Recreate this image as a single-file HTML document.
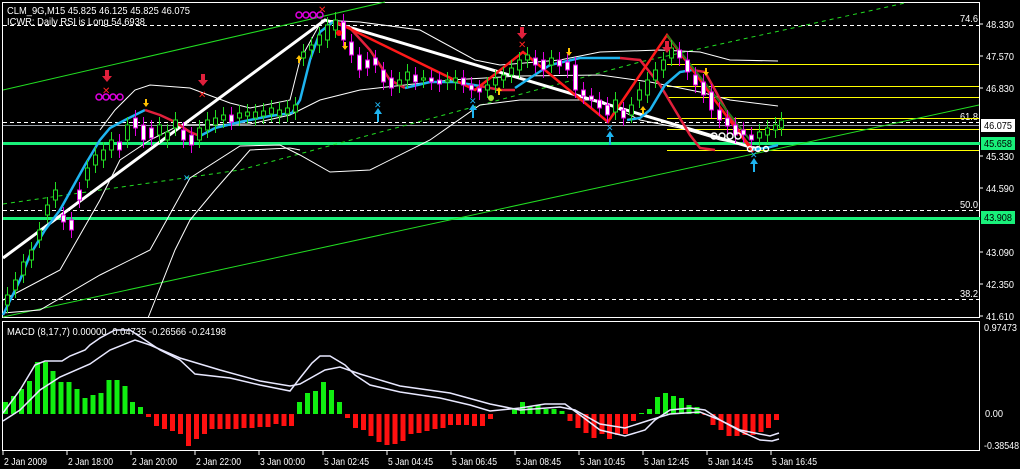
<!DOCTYPE html>
<html><head><meta charset="utf-8"><style>
html,body{margin:0;padding:0;background:#000;width:1020px;height:469px;overflow:hidden}
svg{display:block}
text{font-family:"Liberation Sans",sans-serif}
</style></head><body>
<svg id="s" width="1020" height="469" viewBox="0 0 1020 469" xmlns="http://www.w3.org/2000/svg" shape-rendering="crispEdges" fill="#fff" font-size="10.5">
<rect width="1020" height="469" fill="#000"/>
<rect x="2.5" y="2.5" width="977" height="315" fill="none" stroke="#fff"/>
<rect x="2.5" y="321.5" width="977" height="129" fill="none" stroke="#fff"/>
<g stroke="#fff" stroke-dasharray="4,3">
<line x1="3" y1="25.5" x2="979" y2="25.5"/>
<line x1="3" y1="122.5" x2="979" y2="122.5"/>
<line x1="3" y1="210.5" x2="979" y2="210.5"/>
<line x1="3" y1="299.5" x2="979" y2="299.5"/>
</g>
<line x1="3" y1="125.5" x2="979" y2="125.5" stroke="#9aa0a8"/>
<g fill="#fff">
<text x="960" y="22" textLength="18" lengthAdjust="spacingAndGlyphs">74.6</text><text x="960" y="120" textLength="18" lengthAdjust="spacingAndGlyphs">61.8</text><text x="960" y="208" textLength="18" lengthAdjust="spacingAndGlyphs">50.0</text><text x="960" y="297" textLength="18" lengthAdjust="spacingAndGlyphs">38.2</text>
</g>
<g stroke="#ffff00">
<line x1="667" y1="64.5" x2="979" y2="64.5"/><line x1="667" y1="86.5" x2="979" y2="86.5"/>
<line x1="667" y1="97.5" x2="979" y2="97.5"/><line x1="667" y1="118.5" x2="979" y2="118.5"/>
<line x1="667" y1="129.5" x2="979" y2="129.5"/><line x1="667" y1="150.5" x2="979" y2="150.5"/>
</g>
<rect x="3" y="142" width="977" height="3" fill="#19f07a"/>
<rect x="3" y="217" width="977" height="3" fill="#19f07a"/>
<g shape-rendering="auto" fill="none">
<line x1="3" y1="90" x2="385" y2="2" stroke="#22dd22"/>
<line x1="3" y1="317" x2="979" y2="105" stroke="#22dd22"/>
<polyline points="3,204 240,170 640,62 905,3" stroke="#22dd22" stroke-dasharray="4,4"/>
<polyline stroke="#fff" points="100,130 115,110 135,90 150,85 190,88 230,103 250,108 290,100 300,60 322,20 360,22 420,30 475,60 500,65 560,60 600,52 660,50 700,52 730,60 778,61"/>
<polyline stroke="#fff" points="3,300 60,270 100,200 120,160 150,140 180,125 250,124 290,115 320,100 360,90 450,80 520,76 600,75 650,82 700,92 730,100 778,106"/>
<polyline stroke="#fff" points="3,313 40,310 100,275 150,250 190,178 240,146 280,145 300,155 330,172 370,170 430,140 480,105 520,100 600,100 640,120 680,128 720,140 760,148"/>
<polyline stroke="#fff" points="148,318 175,250 190,220 215,190 250,150 290,148 300,150"/>
<polyline stroke="#fff" stroke-width="3" points="3,258 325,20 760,150"/>
<polyline stroke="#1eb4f0" stroke-width="2.5" points="3,315 20,280 30,255 45,230 60,210 85,165 100,140 110,128 125,120 145,110"/>
<polyline stroke="#e0203c" stroke-width="2.5" points="145,110 160,115 175,122 190,132 200,136"/>
<polyline stroke="#1eb4f0" stroke-width="2.5" points="200,136 215,128 240,122 270,116 292,113 300,100 310,60 320,32 333,22"/>
<polyline stroke="#e0203c" stroke-width="2.5" points="333,22 350,28 370,50 390,80 405,88"/>
<polyline stroke="#1eb4f0" stroke-width="2.5" points="405,88 430,82 455,82 480,86"/>
<polyline stroke="#e0203c" stroke-width="2.5" points="480,86 500,90 515,90"/>
<polyline stroke="#1eb4f0" stroke-width="2.5" points="515,88 530,78 550,65 580,58 600,58 620,58"/>
<polyline stroke="#e0203c" stroke-width="2.5" points="620,58 640,60 660,85 675,110 690,135 700,148 715,150"/>
<polyline stroke="#1eb4f0" stroke-width="2.5" points="627,120 640,118 650,110 665,85 680,72 692,70"/>
<polyline stroke="#e0203c" stroke-width="2.5" points="692,70 705,72 715,90 725,108 735,125 745,140 752,148"/>
<polyline stroke="#1eb4f0" stroke-width="2.5" points="752,150 770,147 778,145"/>
<polyline stroke="#ff1a1a" stroke-width="2.5" points="336,22 475,90 523,52 608,122 667,35 753,152"/>
<line x1="667" y1="35" x2="750" y2="140" stroke="#2a7a1a" stroke-width="2"/>
</g>
<g id="candles"></g>
<g fill="none" stroke="#e000e0" stroke-width="1.5" shape-rendering="auto">
<circle cx="99" cy="97" r="3"/><circle cx="106" cy="97" r="3"/><circle cx="113" cy="97" r="3"/><circle cx="120" cy="97" r="3"/>
<circle cx="299" cy="15" r="3"/><circle cx="306" cy="15" r="3"/><circle cx="313" cy="15" r="3"/><circle cx="320" cy="15" r="3"/>
</g>
<g fill="none" stroke="#fff" stroke-width="1.5" shape-rendering="auto">
<circle cx="714" cy="136" r="3"/><circle cx="722" cy="136" r="3"/><circle cx="730" cy="136" r="3"/><circle cx="738" cy="136" r="3"/>
<circle cx="750" cy="149" r="2.5"/><circle cx="758" cy="149" r="2.5"/><circle cx="766" cy="149" r="2.5"/>
</g>
<g fill="#e0203c" shape-rendering="auto">
<path d="M105,70h4v6h3l-5,6l-5,-6h3z"/><path d="M201,74h4v6h3l-5,6l-5,-6h3z"/><path d="M520,27h4v6h3l-5,6l-5,-6h3z"/><path d="M665,41h4v6h3l-5,6l-5,-6h3z"/>
<g fill="#ff2020" font-size="10"><text x="102" y="94">✕</text><text x="198" y="98">✕</text>
<text x="318" y="13">✕</text><text x="518" y="48">✕</text></g>
<circle cx="339" cy="33" r="3" fill="#ff1010"/>
</g>
<g fill="#ffc000" shape-rendering="auto">
<path d="M145,99h2v4h2l-3,4l-3,-4h2z"/><path d="M344,42h2v4h2l-3,4l-3,-4h2z"/><path d="M568,48h2v4h2l-3,4l-3,-4h2z"/><path d="M705,68h2v4h2l-3,4l-3,-4h2z"/>
<path d="M298,63h2v-4h2l-3,-4l-3,4h2z"/><path d="M498,95h2v-4h2l-3,-4l-3,4h2z"/><path d="M642,114h2v-4h2l-3,-4l-3,4h2z"/>
</g>
<g fill="#1eb4f0" shape-rendering="auto" font-size="9">
<path d="M377,122h2v-8h3l-4,-6l-4,6h3z"/><text x="374" y="108">✕</text>
<path d="M472,118h2v-8h3l-4,-6l-4,6h3z"/><text x="469" y="104">✕</text>
<path d="M609,145h2v-8h3l-4,-6l-4,6h3z"/><text x="606" y="131">✕</text>
<path d="M753,172h2v-8h3l-4,-6l-4,6h3z"/><text x="750" y="158">✕</text>
<text x="183" y="181">✕</text>
</g>
<circle cx="491" cy="98" r="3" fill="#9fe83a" shape-rendering="auto"/>
<text x="7" y="14" textLength="183" lengthAdjust="spacingAndGlyphs">CLM_9G,M15  45.825 46.125 45.825 46.075</text>
<text x="7" y="25" textLength="138" lengthAdjust="spacingAndGlyphs">ICWR: Daily RSI is Long 54.6938</text>
<text x="7" y="335" textLength="219" lengthAdjust="spacingAndGlyphs">MACD  (8,17,7) 0.00000 -0.04735 -0.26566 -0.24198</text>
<g id="axis"></g>
<rect x="981" y="119" width="34" height="13" fill="#fff"/><text x="984" y="129" fill="#000" textLength="28" lengthAdjust="spacingAndGlyphs">46.075</text>
<rect x="981" y="137" width="34" height="13" fill="#19f07a"/><text x="984" y="147" fill="#000" textLength="28" lengthAdjust="spacingAndGlyphs">45.658</text>
<rect x="981" y="211" width="34" height="13" fill="#19f07a"/><text x="984" y="221" fill="#000" textLength="28" lengthAdjust="spacingAndGlyphs">43.908</text>
<g id="hist"></g>
<g fill="none" stroke="#e8e8ff" stroke-width="1.5" shape-rendering="auto">
<polyline points="3,413 20,390 35,365 45,361 62,361 70,356 85,350 90,345 100,338 115,330 130,330 145,340 160,350 180,360 195,374 230,378 260,385 290,391 300,378 312,363 320,356 330,356 345,365 355,375 370,385 400,392 440,398 470,405 490,411 520,408 545,404 565,404 580,415 600,430 625,436 645,430 655,420 670,410 690,408 705,410 720,420 740,431 760,440 772,441 779,439"/>
<polyline points="3,421 20,410 40,390 60,377 90,364 110,350 135,340 150,345 180,358 220,370 260,381 290,386 300,384 325,370 340,367 360,374 400,386 450,393 490,404 520,410 560,407 575,410 600,424 625,428 650,420 670,414 700,412 720,420 740,430 770,436 779,433"/>
</g>
<g id="times"></g>
</svg>
<script>
var NS="http://www.w3.org/2000/svg";
function el(p,t,a,txt){var e=document.createElementNS(NS,t);for(var k in a)e.setAttribute(k,a[k]);if(txt)e.textContent=txt;document.getElementById(p).appendChild(e);}
var h=[12,18,25,33,52,52,43,32,32,25,16,19,21,34,34,28,12,7,-3,-12,-15,-17,-20,-32,-25,-20,-15,-15,-15,-15,-14,-14,-13,-13,-10,-12,-12,12,21,23,32,24,12,-4,-14,-16,-22,-28,-31,-30,-27,-20,-19,-17,-15,-14,-11,-11,-11,-12,-12,-5,0,0,6,12,8,9,5,5,3,-7,-14,-19,-24,-20,-25,-21,-20,-7,1,5,17,21,18,16,9,7,-1,-11,-16,-22,-22,-21,-21,-18,-14,-6];
h.forEach(function(v,k){var x=3+k*7.95;if(v>0)el('hist','rect',{x:x,y:414-v,width:5,height:v,fill:'#11ee11'});else if(v<0)el('hist','rect',{x:x,y:414,width:5,height:-v,fill:'#ff1010'});});
[["48.330",28],["47.570",60],["46.830",92],["45.330",160],["44.590",192],["43.090",256],["42.350",288],["41.610",320]].forEach(function(a){el('axis','line',{x1:980,x2:983,y1:a[1]-4,y2:a[1]-4,stroke:'#fff'});el('axis','text',{x:986,y:a[1],textLength:28,lengthAdjust:'spacingAndGlyphs'},a[0]);});
el('axis','text',{x:984,y:331,textLength:33,lengthAdjust:'spacingAndGlyphs'},"0.97473");el('axis','text',{x:985,y:417,textLength:18,lengthAdjust:'spacingAndGlyphs'},"0.00");el('axis','text',{x:984,y:449,textLength:35,lengthAdjust:'spacingAndGlyphs'},"-0.38548");
["2 Jan 2009","2 Jan 18:00","2 Jan 20:00","2 Jan 22:00","3 Jan 00:00","5 Jan 02:45","5 Jan 04:45","5 Jan 06:45","5 Jan 08:45","5 Jan 10:45","5 Jan 12:45","5 Jan 14:45","5 Jan 16:45"].forEach(function(t,i){var x=3+i*64;el('times','line',{x1:x,x2:x,y1:451,y2:455,stroke:'#fff'});el('times','text',{x:x+1,y:465,textLength:i==0?43:45,lengthAdjust:'spacingAndGlyphs'},t);});
var c=[[5,305,295],[13,290,280],[21,275,262],[29,260,250],[37,240,230],[45,215,205],[53,200,190],[61,215,222],[69,220,230],[77,190,200],[85,180,168],[93,165,155],[101,160,150],[109,150,140],[117,142,150],[125,140,125],[133,118,128],[141,125,140],[149,128,138],[157,135,125],[165,140,132],[173,128,120],[181,130,140],[189,135,145],[197,140,128],[205,130,120],[213,125,118],[221,120,115],[229,115,122],[237,118,113],[245,116,112],[253,118,112],[261,116,111],[269,114,108],[277,116,110],[285,114,108],[293,112,105],[301,58,52],[309,50,45],[317,45,35],[325,40,25],[333,30,20],[341,22,40],[349,42,55],[357,55,70],[365,60,68],[373,58,65],[381,70,82],[389,78,88],[397,85,80],[405,80,72],[413,75,82],[421,80,78],[429,78,82],[437,80,84],[445,82,80],[453,82,78],[461,78,85],[469,85,90],[477,88,92],[485,90,85],[493,85,78],[501,80,75],[509,75,68],[517,70,60],[525,60,55],[533,58,65],[541,60,70],[549,65,58],[557,60,66],[565,62,70],[573,65,90],[581,90,96],[589,96,100],[597,100,108],[605,105,115],[613,112,100],[621,110,118],[629,115,105],[637,100,90],[645,95,80],[653,80,70],[661,70,60],[669,58,48],[677,50,58],[685,60,72],[693,75,85],[701,82,95],[709,92,110],[717,110,120],[725,118,126],[733,125,135],[741,130,135],[749,135,140],[757,138,132],[765,135,128],[773,130,125],[779,128,120]];
c.forEach(function(a){var up=a[2]<a[1],top=Math.min(a[1],a[2]),bot=Math.max(a[1],a[2]);var col=up?'#22dd22':'#e000e0';
el('candles','line',{x1:a[0]+2.5,x2:a[0]+2.5,y1:top-8,y2:bot+8,stroke:col});
el('candles','rect',{x:a[0]+0.5,y:top,width:4,height:Math.max(bot-top,2),fill:up?'#000':'#fff',stroke:col});});
</script>
</body></html>
